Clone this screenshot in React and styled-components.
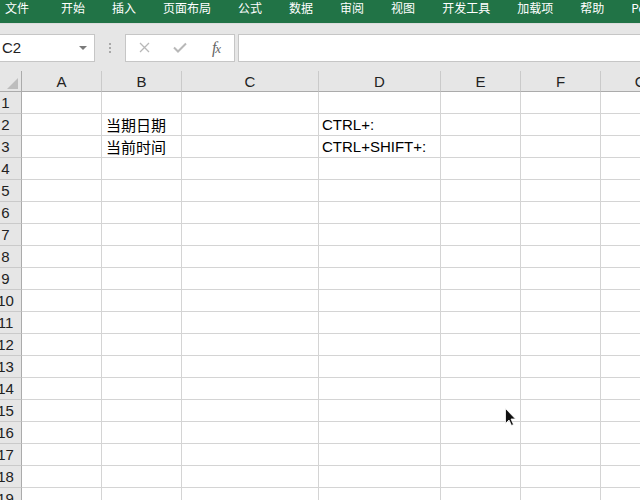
import React from 'react';
import styled, { createGlobalStyle } from 'styled-components';

const GlobalStyle = createGlobalStyle`
  html, body {
    margin: 0;
    padding: 0;
    background: #ffffff;
    overflow: hidden;
  }
  body {
    font-family: "Liberation Sans", "Noto Sans CJK SC", sans-serif;
  }
`;

const Page = styled.div`
  position: relative;
  width: 640px;
  height: 500px;
  overflow: hidden;
  background: #ffffff;
`;

const Ribbon = styled.div`
  height: 23px;
  background-color: #217346;
  display: flex;
  align-items: flex-start;
  gap: 27px;
  padding-left: 5px;
  white-space: nowrap;
  overflow: hidden;
`;

const Tab = styled.div`
  font-family: "Noto Sans CJK SC", sans-serif;
  font-size: 12px;
  line-height: 16px;
  color: #ffffff;
  flex: none;
  margin-right: ${p => (p.$first ? '5px' : '0')};
`;

const Toolbar = styled.div`
  height: 48px;
  box-sizing: border-box;
  background-color: #e6e6e6;
  border-top: 1px solid #dcdcdc;
  display: flex;
  align-items: center;
`;

const NameBox = styled.div`
  width: 97px;
  height: 28px;
  margin-left: -2px;
  padding: 0 7px 0 3px;
  box-sizing: border-box;
  background: #ffffff;
  border: 1px solid #c6c6c6;
  display: flex;
  align-items: center;
  justify-content: space-between;
  font-size: 15px;
  color: #222222;
`;

const DropArrow = styled.span`
  width: 0;
  height: 0;
  border-left: 4px solid transparent;
  border-right: 4px solid transparent;
  border-top: 4px solid #7a7a7a;
`;

const Splitter = styled.div`
  width: 30px;
  display: flex;
  flex-direction: column;
  align-items: center;
  gap: 2px;
  padding-top: 1px;
`;

const Dot = styled.span`
  width: 2px;
  height: 2px;
  background: #a8a8a8;
`;

const FormulaButtons = styled.div`
  width: 110px;
  height: 28px;
  box-sizing: border-box;
  background: #ffffff;
  border: 1px solid #c6c6c6;
  display: flex;
  align-items: center;
`;

const FxButton = styled.div`
  flex: 1;
  height: 100%;
  display: flex;
  align-items: center;
  justify-content: center;
  color: ${p => p.$color || '#b8b8b8'};
`;

const FxLabel = styled.span`
  font-family: "Liberation Serif", serif;
  font-style: italic;
  font-size: 16px;
  color: #666666;
  letter-spacing: -1px;

  & > small {
    font-size: 13px;
  }
`;

const FormulaInput = styled.div`
  flex: 1;
  height: 28px;
  margin-left: 3px;
  margin-right: -2px;
  box-sizing: border-box;
  background: #ffffff;
  border: 1px solid #c6c6c6;
`;

const SheetWrap = styled.div`
  overflow: hidden;
`;

const Grid = styled.div`
  display: grid;
  grid-template-columns: 32px 80px 80px 137px 122px 80px 80px 80px;
  margin-left: -10px;
  width: max-content;
`;

const HeadCell = styled.div`
  height: 21px;
  box-sizing: border-box;
  background: #e6e6e6;
  border-right: 1px solid ${p => (p.$corner ? '#ababab' : '#cacaca')};
  border-bottom: 1px solid #ababab;
  display: flex;
  align-items: center;
  justify-content: center;
  font-size: 15px;
  color: #222222;
`;

const Corner = styled(HeadCell)`
  align-items: flex-end;
  justify-content: flex-end;
  padding: 0 3px 2px 0;

  &::after {
    content: '';
    width: 0;
    height: 0;
    border-left: 11px solid transparent;
    border-bottom: 11px solid #bdbdbd;
  }
`;

const RowHead = styled.div`
  height: 22px;
  box-sizing: border-box;
  background: #e6e6e6;
  border-right: 1px solid #ababab;
  border-bottom: 1px solid #cacaca;
  display: flex;
  align-items: center;
  justify-content: center;
  font-size: 15px;
  color: #222222;
`;

const Cell = styled.div`
  height: 22px;
  box-sizing: border-box;
  border-right: 1px solid #d4d4d4;
  border-bottom: 1px solid #d4d4d4;
  padding-left: ${p => (p.$pad || 4)}px;
  display: flex;
  align-items: center;
  font-size: 15px;
  color: #000000;
  white-space: nowrap;
`;

const Cursor = styled.svg`
  position: absolute;
  left: 505px;
  top: 408px;
`;

const tabs = ['文件', '开始', '插入', '页面布局', '公式', '数据', '审阅', '视图', '开发工具', '加载项', '帮助', 'Power Pivot'];
const columns = ['A', 'B', 'C', 'D', 'E', 'F', 'G'];
const values = {
  '2B': '当期日期',
  '2D': 'CTRL+:',
  '3B': '当前时间',
  '3D': 'CTRL+SHIFT+:',
};

const App = () => {
  const rows = Array.from({ length: 19 }, (_, i) => i + 1);
  return (
    <Page>
      <GlobalStyle />
      <Ribbon>
        {tabs.map((t, i) => (
          <Tab key={t} $first={i === 0}>{t}</Tab>
        ))}
      </Ribbon>

      <Toolbar>
        <NameBox>
          <span>C2</span>
          <DropArrow />
        </NameBox>
        <Splitter>
          <Dot />
          <Dot />
          <Dot />
        </Splitter>
        <FormulaButtons>
          <FxButton>
            <svg width="11" height="11" viewBox="0 0 11 11">
              <path d="M1 1 L10 10 M10 1 L1 10" stroke="currentColor" strokeWidth="1.3" fill="none" />
            </svg>
          </FxButton>
          <FxButton>
            <svg width="14" height="11" viewBox="0 0 14 11">
              <path d="M1 5.5 L5 9.5 L13 1.5" stroke="currentColor" strokeWidth="2" fill="none" />
            </svg>
          </FxButton>
          <FxButton>
            <FxLabel>f<small>x</small></FxLabel>
          </FxButton>
        </FormulaButtons>
        <FormulaInput />
      </Toolbar>

      <SheetWrap>
        <Grid>
          <Corner $corner />
          {columns.map(c => (
            <HeadCell key={c}>{c}</HeadCell>
          ))}
          {rows.map(r => (
            <React.Fragment key={r}>
              <RowHead>{r}</RowHead>
              {columns.map(c => (
                <Cell key={c} $pad={c === 'D' ? 3 : 4}>{values[r + c]}</Cell>
              ))}
            </React.Fragment>
          ))}
        </Grid>
      </SheetWrap>

      <Cursor width="12" height="19" viewBox="0 0 12 19">
        <path d="M0.5 0.5 L0.5 15.5 L4 12 L6.5 17.5 L8.5 16.5 L6 11 L10.5 11 Z" fill="#111111" stroke="#ffffff" strokeWidth="0.8" />
      </Cursor>
    </Page>
  );
};

export default App;
